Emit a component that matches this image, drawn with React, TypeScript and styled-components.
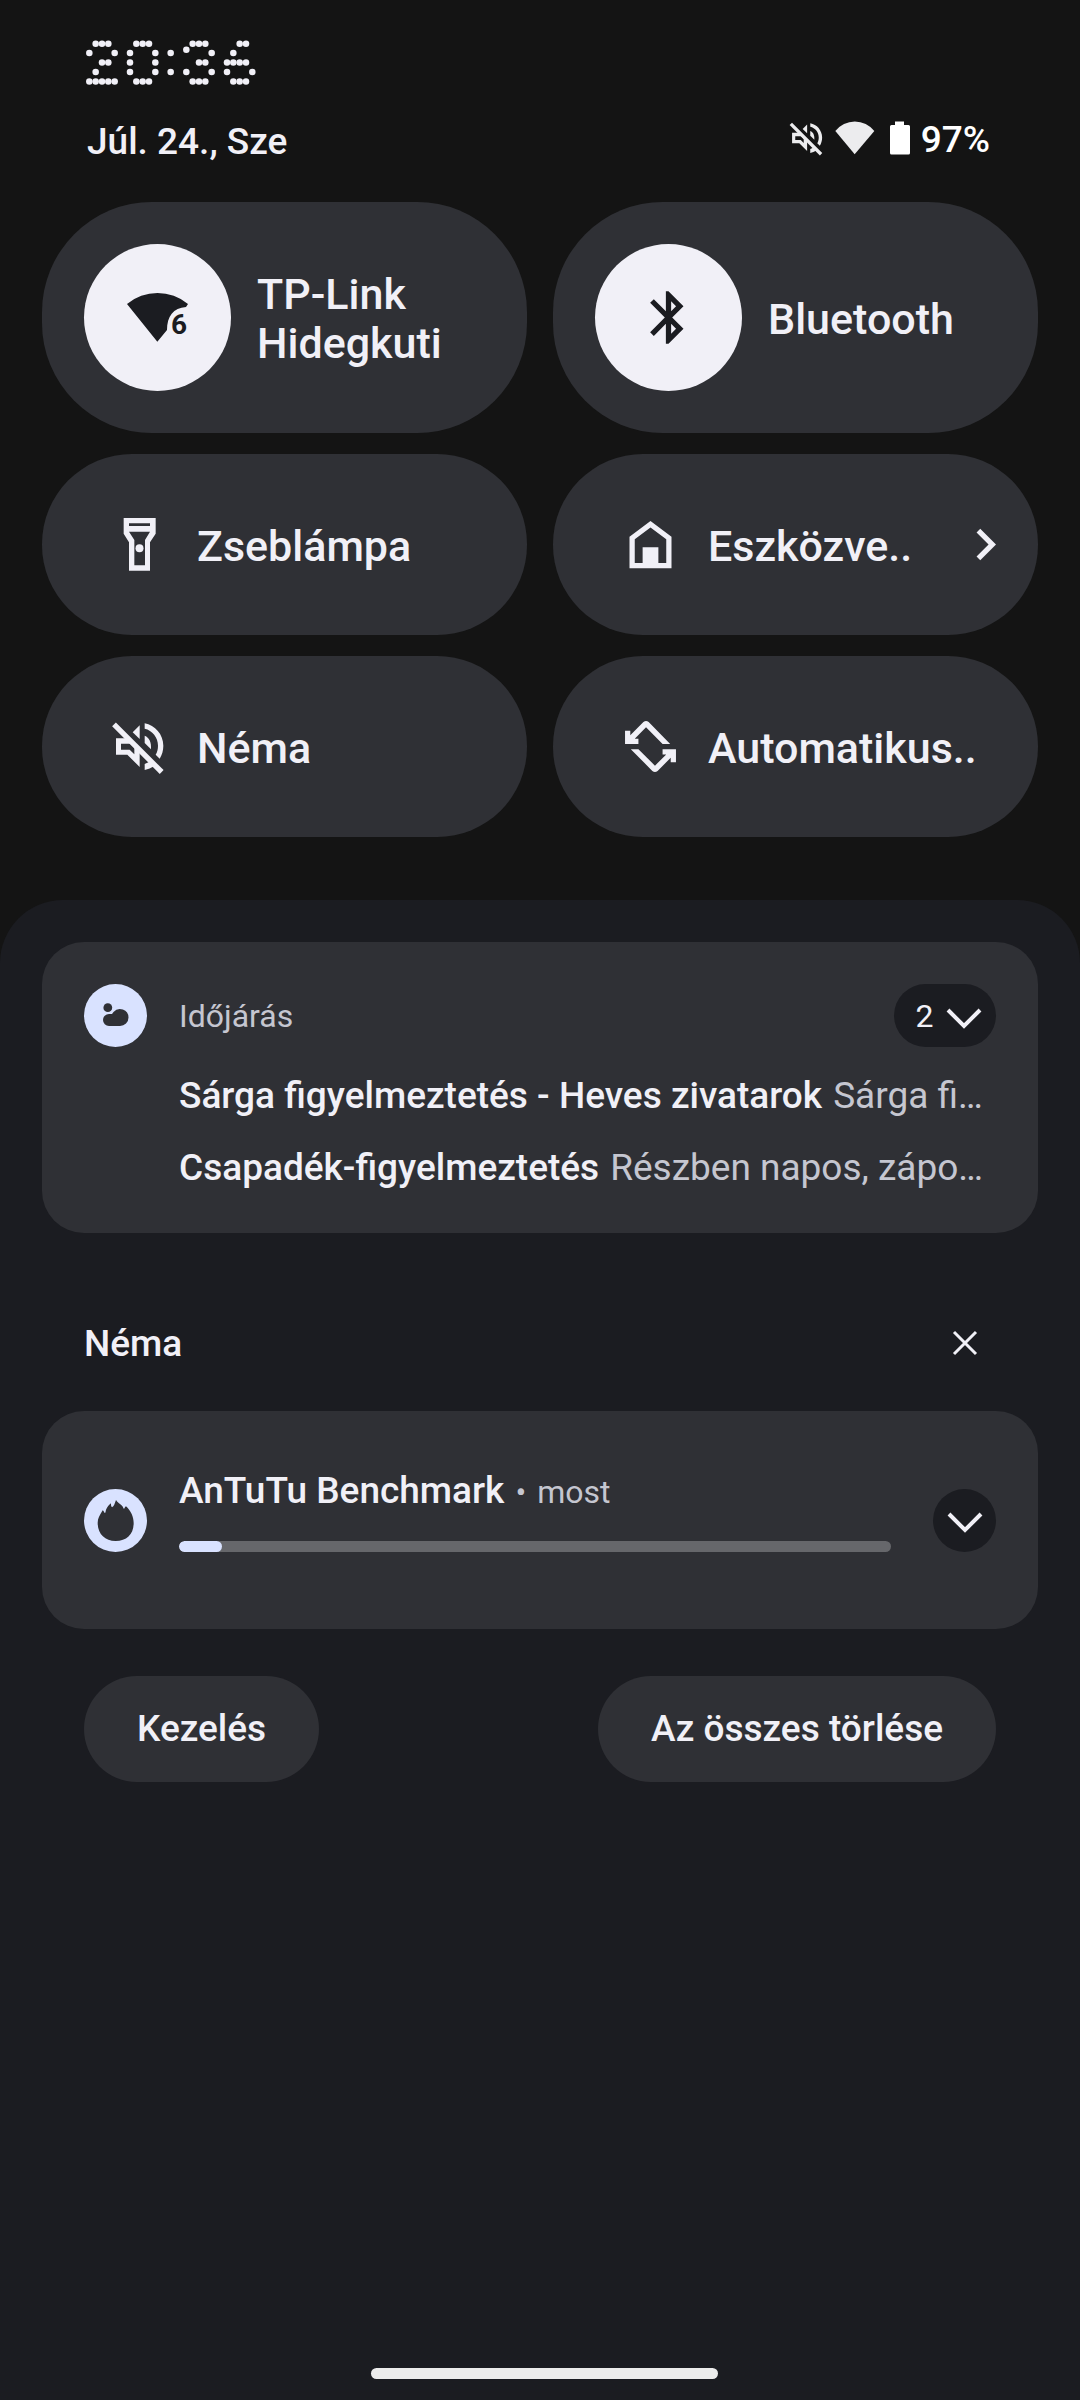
import React from "react";
import styled, { createGlobalStyle } from "styled-components";

const color = {
  backdrop: "#141414",
  panel: "#1b1c21",
  surface: "#2f3035",
  text: "#f1f0f7",
  muted: "#c5c6d0",
  accent: "#d9e2ff",
  track: "#66676b",
};

const GlobalStyle = createGlobalStyle`
  *, *::before, *::after { box-sizing: border-box; }
  body {
    margin: 0;
    background: ${color.backdrop};
    color: ${color.text};
    font-family: Roboto, "Noto Sans", sans-serif;
    font-weight: 500;
    font-size: 37px;
    line-height: 44px;
  }
  button {
    border: 0;
    margin: 0;
    padding: 0;
    background: none;
    color: inherit;
    font: inherit;
    cursor: pointer;
  }
  h2, h3, p { margin: 0; font: inherit; }
  svg { display: block; flex: none; }
`;

const Shade = styled.div`
  display: flex;
  flex-direction: column;
  min-height: 100vh;
`;

const Header = styled.header`
  display: flex;
  flex-direction: column;
  gap: 33px;
  padding: 40px 90px 0 86px;
`;

const StatusRow = styled.div`
  display: flex;
  justify-content: space-between;
  align-items: flex-start;
`;

const DateText = styled.span`
  padding: 2px 0 0 1px;
`;

const Status = styled.div`
  display: flex;
  gap: 8px;
  color: #ffffff;
`;

const StatusIcons = styled.div`
  display: flex;
  align-items: center;
  gap: 8px;
  height: 40px;
  color: #ececee;
`;

const Tiles = styled.section`
  display: grid;
  grid-template-columns: minmax(0, 1fr) minmax(0, 1fr);
  gap: 21px 26px;
  padding: 38px 42px 63px;
`;

const Tile = styled.button<{ $large?: boolean }>`
  display: flex;
  align-items: center;
  gap: 26px;
  min-height: ${(p) => (p.$large ? 231 : 181)}px;
  padding: ${(p) => (p.$large ? "0 42px" : "0 21px 0 66px")};
  border-radius: ${(p) => (p.$large ? 110 : 90)}px;
  background: ${color.surface};
  font-size: 43px;
  line-height: 49px;
  text-align: left;
`;

const TileLabel = styled.span`
  flex: 1;
  min-width: 0;
  padding-top: 3px;
`;

const TileDisc = styled.span`
  display: grid;
  place-items: center;
  flex: none;
  width: 147px;
  height: 147px;
  border-radius: 50%;
  background: ${color.text};
  color: ${color.panel};
`;

const Panel = styled.main`
  flex: 1;
  display: flex;
  flex-direction: column;
  padding: 42px 42px 21px;
  border-radius: 63px 63px 0 0;
  background: ${color.panel};
`;

const Card = styled.article`
  display: flex;
  align-items: flex-start;
  gap: 32px;
  padding: 42px 42px 29px;
  border-radius: 42px;
  background: ${color.surface};
`;

const AppDisc = styled.span`
  flex: none;
  width: 63px;
  height: 63px;
  border-radius: 50%;
  background: ${color.accent};
  color: ${color.surface};
`;

const CardBody = styled.div`
  flex: 1;
  min-width: 0;
`;

const CardHead = styled.div`
  display: flex;
  justify-content: space-between;
  align-items: center;
  height: 63px;
  margin-bottom: 13px;
`;

const Small = styled.span`
  font-size: 32px;
  line-height: 38px;
  font-weight: 400;
  color: ${color.muted};
`;

const Message = styled.p`
  padding: 14px 0;
  overflow: hidden;
  white-space: nowrap;
  text-overflow: ellipsis;
  color: ${color.muted};
  font-weight: 400;
`;

const MessageTitle = styled.b`
  margin-right: 11px;
  font-weight: 500;
  color: ${color.text};
`;

const Expand = styled.button<{ $count?: boolean }>`
  display: flex;
  justify-content: center;
  align-items: center;
  gap: 13px;
  flex: none;
  width: ${(p) => (p.$count ? 102 : 63)}px;
  height: 63px;
  padding-left: ${(p) => (p.$count ? 8 : 0)}px;
  border-radius: 32px;
  background: ${color.panel};
  font-size: 32px;
  line-height: 38px;
  font-weight: 400;
`;

const SectionHead = styled.div`
  display: flex;
  justify-content: space-between;
  align-items: center;
  padding: 78px 42px 36px;
`;

const SectionTitle = styled.h2`
  padding-top: 2px;
`;

const Close = styled.button`
  display: grid;
  place-items: center;
  width: 63px;
  height: 64px;
`;

const ProgressCard = styled(Card)`
  align-items: center;
  min-height: 218px;
  padding: 42px;
`;

const ProgressBody = styled(CardBody)`
  margin: 0 10px 20px 0;
`;

const ProgressTitle = styled.div`
  display: flex;
  align-items: baseline;
  gap: 11px;
  margin-bottom: 28px;
`;

const Progress = styled.progress`
  display: block;
  width: 100%;
  height: 11px;
  appearance: none;
  border: 0;
  border-radius: 6px;
  overflow: hidden;
  background: ${color.track};
  &::-webkit-progress-bar { background: ${color.track}; }
  &::-webkit-progress-value { background: ${color.accent}; border-radius: 6px; }
`;

const Actions = styled.div`
  display: flex;
  justify-content: space-between;
  padding: 47px 42px;
`;

const Pill = styled.button`
  height: 106px;
  padding: 0 53px;
  border-radius: 53px;
  background: ${color.surface};
`;

const Gesture = styled.div`
  display: flex;
  justify-content: center;
  margin-top: auto;
  padding-left: 8px;
`;

const GestureBar = styled.div`
  width: 347px;
  height: 11px;
  border-radius: 6px;
  background: #ececec;
`;

/* Dot-matrix numerals: each entry is [column, row] on a 19 x 28 grid. */
const DOTS: Record<string, number[][]> = {
  "0": [[1, 0], [2, 0], [3, 0], [0, 1], [4, 1], [0, 2], [4, 2], [0, 3], [4, 3], [1, 4], [2, 4], [3, 4]],
  "2": [[1, 0], [2, 0], [3, 0], [0, 1], [4, 1], [2, 2], [3, 2], [1, 3], [0, 4], [1, 4], [2, 4], [3, 4], [4, 4]],
  "3": [[1, 0], [2, 0], [3, 0], [0, 0.65], [4, 1], [2, 2], [3, 2], [0, 3], [4, 3], [1, 4], [2, 4], [3, 4]],
  "6": [[2, 0], [3, 0], [1, 1], [0, 2], [1, 2], [2, 2], [3, 2], [0, 3], [4, 3], [1, 4], [2, 4], [3, 4]],
  ":": [[0, 1], [0, 3]],
};

function DotClock({ value }: { value: string }) {
  let x = 10;
  return (
    <time dateTime={value}>
      <svg width="170" height="45" viewBox="0 0 510 135" fill={color.text} role="img" aria-label={value}>
        {value.split("").map((char, i) => {
          const left = x;
          x += char === ":" ? 47 : 122;
          return DOTS[char].map(([c, r]) => (
            <circle key={`${i}-${c}-${r}`} cx={left + c * 19} cy={11 + r * 28.3} r="9.8" />
          ));
        })}
      </svg>
    </time>
  );
}

const MuteIcon = ({ size = 63 }: { size?: number }) => (
  <svg width={size} height={size} viewBox="234 825 189 189" fill="currentColor" aria-hidden="true">
    <path d="M252 853L395 996" stroke="currentColor" strokeWidth="16" />
    <path
      fillRule="evenodd"
      d="M258 895H292L329 932V981L292 944H258ZM273 911V929H299L313 943V924L300 911Z"
    />
    <path d="M308 877L329 856V897Z" />
    <path d="M344 887C358 893 364 905 363 928L344 909Z" />
    <path d="M344 850C375 855 400 884 400 917C400 931 396 945 389 956L377 944C382 936 384 927 384 917C384 892 367 871 344 866Z" />
    <path d="M344 972L357 966L373 978C364 984 354 988 344 990Z" />
  </svg>
);

const WifiIcon = () => (
  <svg width="40" height="34" viewBox="191 62 120 102" fill="currentColor" aria-hidden="true">
    <path d="M250 162L192 92A74 74 0 0 1 309 92Z" />
  </svg>
);

const BatteryIcon = () => (
  <svg width="30" height="34" viewBox="0 0 30 34" fill="#ffffff" aria-hidden="true">
    <path d="M12 0.5H21V4H25.5Q27 4 27 5.5V32Q27 33.5 25.5 33.5H8.5Q7 33.5 7 32V5.5Q7 4 8.5 4H12Z" />
  </svg>
);

const Wifi6Icon = () => (
  <svg width="63" height="63" viewBox="288 288 189 189" fill="currentColor" aria-hidden="true">
    <path d="M382 455L291 342A143 143 0 0 1 474 342L468 351C430 353 411 380 411 420Z" />
    <text x="423" y="433" fontFamily="Roboto, sans-serif" fontWeight="700" fontSize="84">6</text>
  </svg>
);

const BluetoothIcon = () => (
  <svg width="63" height="63" viewBox="0 0 24 24" fill="currentColor" aria-hidden="true">
    <path d="M17.71 7.71L12 2h-1v7.59L6.41 5 5 6.41 10.59 12 5 17.59 6.41 19 11 14.41V22h1l5.71-5.71-4.3-4.29 4.3-4.29zM13 5.83l1.88 1.88L13 9.59V5.83zm1.88 10.46L13 18.17v-3.76l1.88 1.88z" />
  </svg>
);

const TorchIcon = () => (
  <svg width="63" height="63" viewBox="234 219 189 189" fill="currentColor" aria-hidden="true">
    <path
      fillRule="evenodd"
      d="M281 234H377V281L360 307V392H297V307L281 281ZM297 250V258H360V250ZM297 275L313 300V376H345V300L360 275Z"
    />
    <circle cx="328.5" cy="325" r="12" />
  </svg>
);

const HomeIcon = () => (
  <svg width="63" height="63" viewBox="0 0 24 24" fill="currentColor" aria-hidden="true">
    <path fillRule="evenodd" d="M4 9L12 3l8 6v12H4zM6 10v9h3v-6h6v6h3v-9l-6-4.5z" />
  </svg>
);

const RotateIcon = () => {
  const half = "M19.5 11H16.6L10.3 4.7 6 9H7.4V11H2.3V6H4.3V7.7L9.3 2.7Q10.3 1.9 11.3 2.7Z";
  return (
    <svg width="63" height="63" viewBox="0 0 24 24" fill="currentColor" aria-hidden="true">
      <path d={half} />
      <path d={half} transform="rotate(180 12 12)" />
    </svg>
  );
};

const ChevronRight = () => (
  <svg width="63" height="63" viewBox="0 0 24 24" fill="currentColor" aria-hidden="true">
    <path d="M10 6L8.59 7.41 13.17 12l-4.58 4.59L10 18l6-6z" />
  </svg>
);

const ChevronDown = () => (
  <svg width="36" height="28" viewBox="0 0 36 28" fill="none" stroke="currentColor" strokeWidth="4" aria-hidden="true">
    <path d="M2 8L18 24L34 8" />
  </svg>
);

const CloseIcon = () => (
  <svg width="26" height="26" viewBox="0 0 26 26" stroke="currentColor" strokeWidth="3" aria-hidden="true">
    <path d="M2 2L24 24M24 2L2 24" />
  </svg>
);

const WeatherIcon = () => (
  <svg width="63" height="63" viewBox="0 0 63 63" fill="currentColor" aria-hidden="true">
    <circle cx="23.8" cy="23.7" r="4.4" />
    <path d="M25 42a6 6 0 0 1 0-12h3l1.5-1.9A8.5 8.5 0 0 1 44.5 33.5A8.5 8.5 0 0 1 36 42z" />
  </svg>
);

const FlameIcon = () => (
  <svg width="63" height="63" viewBox="162 564 189 189" fill="currentColor" aria-hidden="true">
    <path d="M203 665C203 652 209 643 218 628C221 630 222 633 224 636C226 636 227 634 227 630C229 622 234 614 243 607C243 612 243 617 246 619C252 616 254 608 258 597C262 604 272 610 276 614C279 617 280 621 282 624C284 621 285 618 288 616C303 630 311 648 311 666C311 700 290 720 257 720C224 720 203 698 203 665Z" />
  </svg>
);

const messages = [
  { title: "Sárga figyelmeztetés - Heves zivatarok", text: "Sárga fi…" },
  { title: "Csapadék-figyelmeztetés", text: "Részben napos, zápo…" },
];

export default function App() {
  return (
    <>
      <GlobalStyle />
      <Shade>
        <Header>
          <DotClock value="20:36" />
          <StatusRow>
            <DateText>Júl. 24., Sze</DateText>
            <Status>
              <StatusIcons>
                <MuteIcon size={40} />
                <WifiIcon />
                <BatteryIcon />
              </StatusIcons>
              <span>97%</span>
            </Status>
          </StatusRow>
        </Header>

        <Tiles>
          <Tile $large aria-pressed="true">
            <TileDisc><Wifi6Icon /></TileDisc>
            <TileLabel>TP-Link Hidegkuti</TileLabel>
          </Tile>
          <Tile $large aria-pressed="true">
            <TileDisc><BluetoothIcon /></TileDisc>
            <TileLabel>Bluetooth</TileLabel>
          </Tile>
          <Tile>
            <TorchIcon />
            <TileLabel>Zseblámpa</TileLabel>
          </Tile>
          <Tile>
            <HomeIcon />
            <TileLabel>Eszközve..</TileLabel>
            <ChevronRight />
          </Tile>
          <Tile>
            <MuteIcon />
            <TileLabel>Néma</TileLabel>
          </Tile>
          <Tile>
            <RotateIcon />
            <TileLabel>Automatikus..</TileLabel>
          </Tile>
        </Tiles>

        <Panel>
          <Card>
            <AppDisc><WeatherIcon /></AppDisc>
            <CardBody>
              <CardHead>
                <Small as="h3">Időjárás</Small>
                <Expand $count aria-label="2 értesítés kibontása">
                  <span>2</span>
                  <ChevronDown />
                </Expand>
              </CardHead>
              {messages.map((m) => (
                <Message key={m.title}>
                  <MessageTitle>{m.title}</MessageTitle>
                  {m.text}
                </Message>
              ))}
            </CardBody>
          </Card>

          <SectionHead>
            <SectionTitle>Néma</SectionTitle>
            <Close aria-label="Bezárás"><CloseIcon /></Close>
          </SectionHead>

          <ProgressCard>
            <AppDisc><FlameIcon /></AppDisc>
            <ProgressBody>
              <ProgressTitle>
                <h3>AnTuTu Benchmark</h3>
                <Small>•</Small>
                <Small>most</Small>
              </ProgressTitle>
              <Progress value={6} max={100} aria-label="AnTuTu Benchmark" />
            </ProgressBody>
            <Expand aria-label="Kibontás"><ChevronDown /></Expand>
          </ProgressCard>

          <Actions>
            <Pill>Kezelés</Pill>
            <Pill>Az összes törlése</Pill>
          </Actions>

          <Gesture><GestureBar /></Gesture>
        </Panel>
      </Shade>
    </>
  );
}
